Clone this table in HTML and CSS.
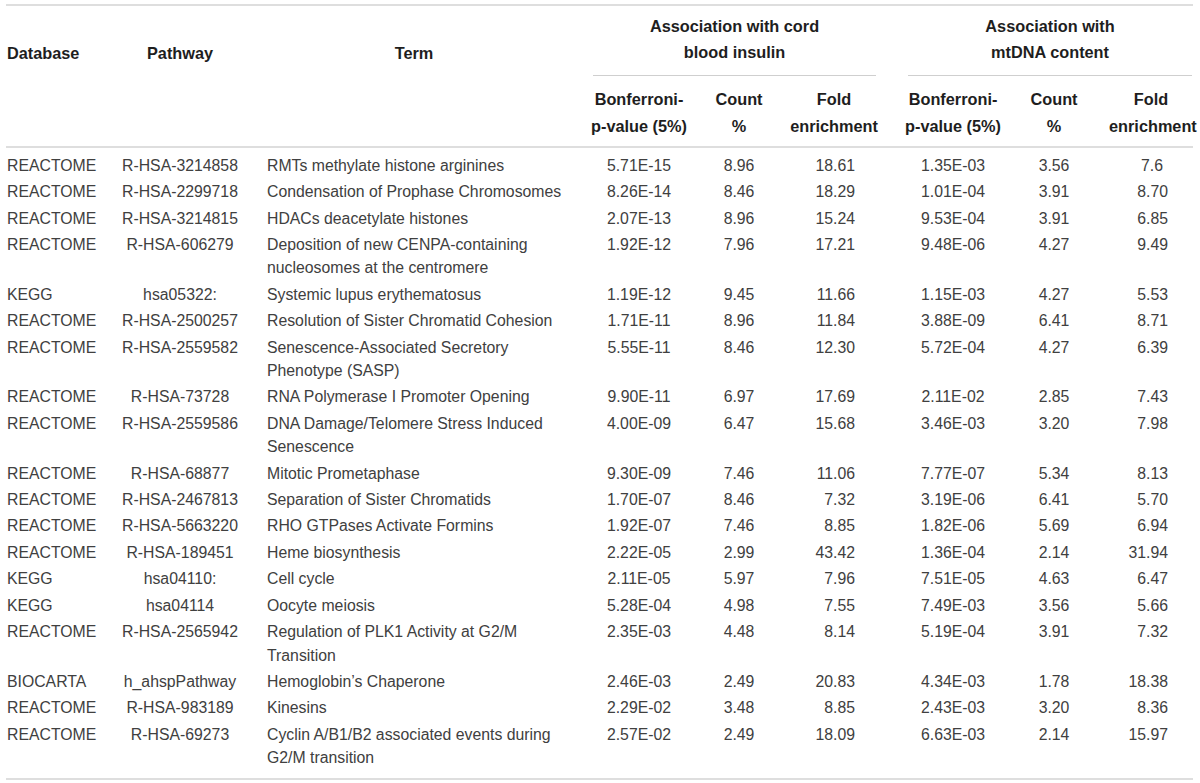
FILE: index.html
```html
<!DOCTYPE html>
<html lang="en">
<head>
<meta charset="utf-8">
<title>Pathway enrichment</title>
<link rel="stylesheet" href="styles.css">
</head>
<body>
<table class="tbl">
  <colgroup>
    <col class="w-db"><col class="w-pw"><col class="w-term">
    <col class="w-bf1"><col class="w-ct1"><col class="w-fe1">
    <col class="w-bf2"><col class="w-ct2"><col class="w-fe2">
  </colgroup>
  <thead>
    <tr class="hrow1">
      <th rowspan="2" class="h-side h-db">Database</th>
      <th rowspan="2" class="h-side">Pathway</th>
      <th rowspan="2" class="h-side">Term</th>
      <th colspan="3" class="h-group"><div class="g-text g1">Association with cord<br>blood insulin</div></th>
      <th colspan="3" class="h-group"><div class="g-text g2">Association with<br>mtDNA content</div></th>
    </tr>
    <tr class="hrow2">
      <th class="h-sub">Bonferroni-<br>p-value (5%)</th>
      <th class="h-sub">Count<br>%</th>
      <th class="h-sub">Fold<br>enrichment</th>
      <th class="h-sub">Bonferroni-<br>p-value (5%)</th>
      <th class="h-sub">Count<br>%</th>
      <th class="h-sub h-last">Fold<br>enrichment</th>
    </tr>
  </thead>
  <tbody>
    <tr><td class="db">REACTOME</td><td class="pw">R-HSA-3214858</td><td class="term">RMTs methylate histone arginines</td><td class="bf">5.71E-15</td><td class="ct">8.96</td><td class="fe1">18.61</td><td class="bf">1.35E-03</td><td class="ct">3.56</td><td class="fe2 one-dec">7.6</td></tr>
    <tr><td class="db">REACTOME</td><td class="pw">R-HSA-2299718</td><td class="term">Condensation of Prophase Chromosomes</td><td class="bf">8.26E-14</td><td class="ct">8.46</td><td class="fe1">18.29</td><td class="bf">1.01E-04</td><td class="ct">3.91</td><td class="fe2">8.70</td></tr>
    <tr><td class="db">REACTOME</td><td class="pw">R-HSA-3214815</td><td class="term">HDACs deacetylate histones</td><td class="bf">2.07E-13</td><td class="ct">8.96</td><td class="fe1">15.24</td><td class="bf">9.53E-04</td><td class="ct">3.91</td><td class="fe2">6.85</td></tr>
    <tr><td class="db">REACTOME</td><td class="pw">R-HSA-606279</td><td class="term">Deposition of new CENPA-containing<br>nucleosomes at the centromere</td><td class="bf">1.92E-12</td><td class="ct">7.96</td><td class="fe1">17.21</td><td class="bf">9.48E-06</td><td class="ct">4.27</td><td class="fe2">9.49</td></tr>
    <tr><td class="db">KEGG</td><td class="pw">hsa05322:</td><td class="term">Systemic lupus erythematosus</td><td class="bf">1.19E-12</td><td class="ct">9.45</td><td class="fe1">11.66</td><td class="bf">1.15E-03</td><td class="ct">4.27</td><td class="fe2">5.53</td></tr>
    <tr><td class="db">REACTOME</td><td class="pw">R-HSA-2500257</td><td class="term">Resolution of Sister Chromatid Cohesion</td><td class="bf">1.71E-11</td><td class="ct">8.96</td><td class="fe1">11.84</td><td class="bf">3.88E-09</td><td class="ct">6.41</td><td class="fe2">8.71</td></tr>
    <tr><td class="db">REACTOME</td><td class="pw">R-HSA-2559582</td><td class="term">Senescence-Associated Secretory<br>Phenotype (SASP)</td><td class="bf">5.55E-11</td><td class="ct">8.46</td><td class="fe1">12.30</td><td class="bf">5.72E-04</td><td class="ct">4.27</td><td class="fe2">6.39</td></tr>
    <tr><td class="db">REACTOME</td><td class="pw">R-HSA-73728</td><td class="term">RNA Polymerase I Promoter Opening</td><td class="bf">9.90E-11</td><td class="ct">6.97</td><td class="fe1">17.69</td><td class="bf">2.11E-02</td><td class="ct">2.85</td><td class="fe2">7.43</td></tr>
    <tr><td class="db">REACTOME</td><td class="pw">R-HSA-2559586</td><td class="term">DNA Damage/Telomere Stress Induced<br>Senescence</td><td class="bf">4.00E-09</td><td class="ct">6.47</td><td class="fe1">15.68</td><td class="bf">3.46E-03</td><td class="ct">3.20</td><td class="fe2">7.98</td></tr>
    <tr><td class="db">REACTOME</td><td class="pw">R-HSA-68877</td><td class="term">Mitotic Prometaphase</td><td class="bf">9.30E-09</td><td class="ct">7.46</td><td class="fe1">11.06</td><td class="bf">7.77E-07</td><td class="ct">5.34</td><td class="fe2">8.13</td></tr>
    <tr><td class="db">REACTOME</td><td class="pw">R-HSA-2467813</td><td class="term">Separation of Sister Chromatids</td><td class="bf">1.70E-07</td><td class="ct">8.46</td><td class="fe1">7.32</td><td class="bf">3.19E-06</td><td class="ct">6.41</td><td class="fe2">5.70</td></tr>
    <tr><td class="db">REACTOME</td><td class="pw">R-HSA-5663220</td><td class="term">RHO GTPases Activate Formins</td><td class="bf">1.92E-07</td><td class="ct">7.46</td><td class="fe1">8.85</td><td class="bf">1.82E-06</td><td class="ct">5.69</td><td class="fe2">6.94</td></tr>
    <tr><td class="db">REACTOME</td><td class="pw">R-HSA-189451</td><td class="term">Heme biosynthesis</td><td class="bf">2.22E-05</td><td class="ct">2.99</td><td class="fe1">43.42</td><td class="bf">1.36E-04</td><td class="ct">2.14</td><td class="fe2">31.94</td></tr>
    <tr><td class="db">KEGG</td><td class="pw">hsa04110:</td><td class="term">Cell cycle</td><td class="bf">2.11E-05</td><td class="ct">5.97</td><td class="fe1">7.96</td><td class="bf">7.51E-05</td><td class="ct">4.63</td><td class="fe2">6.47</td></tr>
    <tr><td class="db">KEGG</td><td class="pw">hsa04114</td><td class="term">Oocyte meiosis</td><td class="bf">5.28E-04</td><td class="ct">4.98</td><td class="fe1">7.55</td><td class="bf">7.49E-03</td><td class="ct">3.56</td><td class="fe2">5.66</td></tr>
    <tr><td class="db">REACTOME</td><td class="pw">R-HSA-2565942</td><td class="term">Regulation of PLK1 Activity at G2/M<br>Transition</td><td class="bf">2.35E-03</td><td class="ct">4.48</td><td class="fe1">8.14</td><td class="bf">5.19E-04</td><td class="ct">3.91</td><td class="fe2">7.32</td></tr>
    <tr><td class="db">BIOCARTA</td><td class="pw">h_ahspPathway</td><td class="term">Hemoglobin’s Chaperone</td><td class="bf">2.46E-03</td><td class="ct">2.49</td><td class="fe1">20.83</td><td class="bf">4.34E-03</td><td class="ct">1.78</td><td class="fe2">18.38</td></tr>
    <tr><td class="db">REACTOME</td><td class="pw">R-HSA-983189</td><td class="term">Kinesins</td><td class="bf">2.29E-02</td><td class="ct">3.48</td><td class="fe1">8.85</td><td class="bf">2.43E-03</td><td class="ct">3.20</td><td class="fe2">8.36</td></tr>
    <tr><td class="db">REACTOME</td><td class="pw">R-HSA-69273</td><td class="term">Cyclin A/B1/B2 associated events during<br>G2/M transition</td><td class="bf">2.57E-02</td><td class="ct">2.49</td><td class="fe1">18.09</td><td class="bf">6.63E-03</td><td class="ct">2.14</td><td class="fe2">15.97</td></tr>
  </tbody>
</table>
</body>
</html>
```
FILE: styles.css
```css
html, body {
  margin: 0;
  padding: 0;
  background: #ffffff;
}
body {
  padding: 4px 7px 0 6px;
  font-family: "Liberation Sans", Arial, Helvetica, sans-serif;
  font-size: 15.8px;
  color: #404040;
}
.tbl {
  width: 1187px;
  table-layout: fixed;
  border-collapse: collapse;
  border-top: 2px solid #dedede;
  border-bottom: 2px solid #dedede;
}
.w-db { width: 104px; }
.w-pw { width: 140px; }
.w-term { width: 328px; }
.w-bf1 { width: 122px; }
.w-ct1 { width: 78px; }
.w-fe1 { width: 112px; }
.w-bf2 { width: 126px; }
.w-ct2 { width: 76px; }
.w-fe2 { width: 101px; }

th {
  font-weight: bold;
  font-size: 16.3px;
  color: #1e1e1e;
  line-height: 26.5px;
  text-align: center;
  white-space: nowrap;
  padding: 0;
}
.h-side {
  vertical-align: top;
  padding-top: 34px;
  border-bottom: 2px solid #dedede;
}
.h-db {
  text-align: left;
  padding-left: 1px;
}
.h-group {
  vertical-align: top;
  padding-top: 6.5px;
}
.g-text {
  padding-bottom: 9px;
  border-bottom: 1px solid #cfcfcf;
}
.g1 { margin: 0 14px 0 15px; }
.g2 { margin: 0 1px 0 18px; }
.h-sub {
  vertical-align: top;
  padding-top: 10.5px;
  padding-bottom: 6.5px;
  border-bottom: 2px solid #dedede;
}
.h-last { padding-left: 17px; }

td {
  line-height: 23.4px;
  padding: 1.5px 0;
  vertical-align: top;
}
tbody tr:first-child td { padding-top: 6.3px; }
tbody tr:last-child td { padding-bottom: 8.3px; }
.db { text-align: left; padding-left: 1px; }
.pw { text-align: center; }
.term { text-align: left; padding-left: 17px; }
.bf { text-align: center; }
.ct { text-align: center; }
.fe1 { text-align: right; padding-right: 35px; }
.fe2 { text-align: right; padding-right: 25px; }
.fe2.one-dec { padding-right: 30px; }
```
